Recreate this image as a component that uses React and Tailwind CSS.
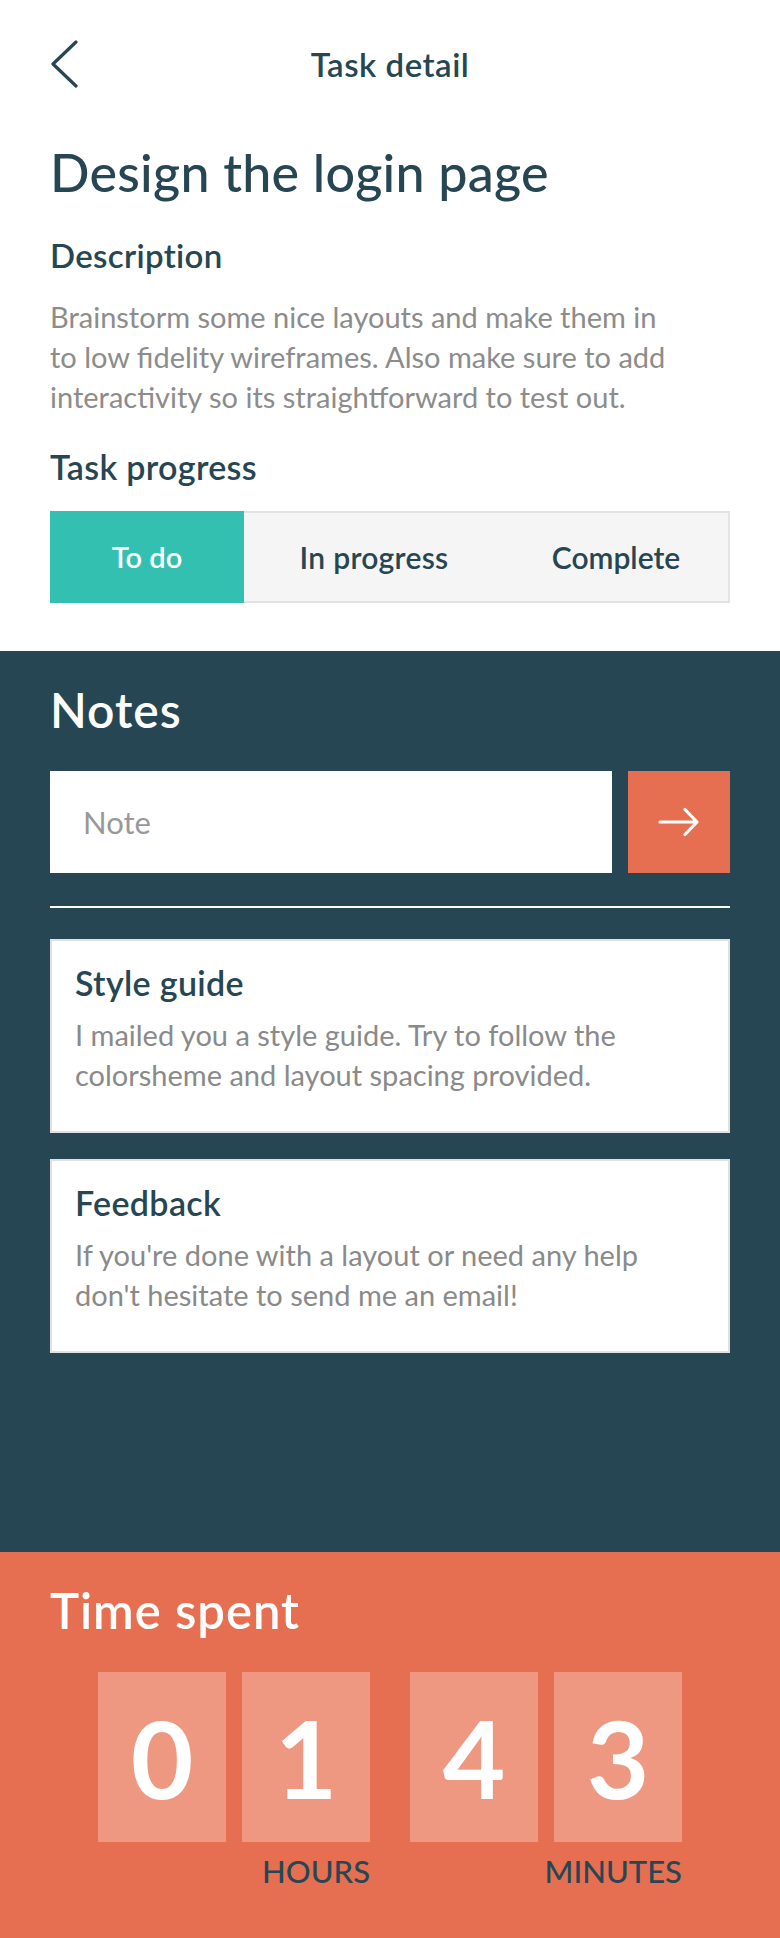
const DARK = "text-[#264653]";

function BackIcon() {
  return (
    <svg width="28" height="48" viewBox="0 0 28 48" fill="none">
      <path d="M26 2 L3 24 L26 46" stroke="#264653" strokeWidth="3.2" strokeLinecap="round" strokeLinejoin="round" />
    </svg>
  );
}

function ArrowIcon() {
  return (
    <svg width="42" height="30" viewBox="0 0 42 30" fill="none">
      <path d="M2 15 H39 M27 2.5 L39 15 L27 27.5" stroke="#ffffff" strokeWidth="3.2" strokeLinecap="round" strokeLinejoin="round" />
    </svg>
  );
}

function NoteCard({ title, children }) {
  return (
    <div className="bg-white border-2 border-[#e1e1e1] pt-[23px] px-[23px] pb-[36px]">
      <h3 className={`text-[34px] leading-[38px] font-semibold tracking-[0.01em] ${DARK}`}>{title}</h3>
      <p className="mt-[13px] text-[29px] leading-[40px] text-[#8a8a8a]">{children}</p>
    </div>
  );
}

function Digit({ value }) {
  return (
    <div className="w-[128px] h-[170px] bg-[#ee9882] flex items-center justify-center">
      <span className="text-[108px] leading-none font-bold text-white">{value}</span>
    </div>
  );
}

function DigitGroup({ digits, label }) {
  return (
    <div className="flex flex-col items-end">
      <div className="flex gap-[16px]">
        {digits.map((d, i) => (
          <Digit key={i} value={d} />
        ))}
      </div>
      <span className={`mt-[11px] text-[31px] leading-[36px] font-medium ${DARK}`}>{label}</span>
    </div>
  );
}

export default function App() {
  return (
    <div className="w-full font-['Lato','Noto_Sans',sans-serif] bg-white">
      {/* Task section */}
      <div className="px-[50px] pb-[48px]">
        <div className="pt-[40px] h-[88px] flex items-center">
          <div className="w-[28px] h-[48px] flex">
            <BackIcon />
          </div>
          <h1 className={`flex-1 text-center text-[33px] leading-[38px] font-semibold tracking-[0.015em] ${DARK}`}>Task detail</h1>
          <div className="w-[28px]" />
        </div>

        <h2 className={`mt-[53px] text-[52px] leading-[62px] font-medium tracking-[0.005em] ${DARK}`}>Design the login page</h2>

        <h3 className={`mt-[33px] text-[33px] leading-[38px] font-semibold tracking-[0.01em] ${DARK}`}>Description</h3>
        <p className="mt-[23px] text-[29px] leading-[40px] text-[#8c8c8c]">
          Brainstorm some nice layouts and make them in
          <br />
          to low fidelity wireframes. Also make sure to add
          <br />
          interactivity so its straightforward to test out.
        </p>

        <h3 className={`mt-[31px] text-[34px] leading-[38px] font-semibold tracking-[0.01em] ${DARK}`}>Task progress</h3>
        <div className="mt-[25px] flex h-[92px]">
          <button className="w-[194px] bg-[#34c0b0] text-white text-[29px] font-semibold">To do</button>
          <div className="flex-1 flex border-2 border-l-0 border-[#e3e3e3] bg-[#f5f5f5]">
            <button className={`w-[260px] text-[30px] font-semibold tracking-[0.01em] ${DARK}`}>In progress</button>
            <button className={`flex-1 text-[30px] font-semibold ${DARK}`}>Complete</button>
          </div>
        </div>
      </div>

      {/* Notes section */}
      <div className="bg-[#264653] h-[901px] px-[50px] pt-[31px]">
        <h2 className="text-[48px] leading-[55px] font-semibold tracking-[0.02em] text-white">Notes</h2>
        <div className="mt-[34px] flex gap-[16px] h-[102px]">
          <input
            placeholder="Note"
            className="flex-1 min-w-0 bg-white pl-[33px] text-[31px] text-[#264653] placeholder:text-[#999999] outline-none"
          />
          <button className="w-[102px] bg-[#e76f51] flex items-center justify-center">
            <ArrowIcon />
          </button>
        </div>
        <div className="mt-[33px] h-[2px] bg-white" />
        <div className="mt-[31px] flex flex-col gap-[26px]">
          <NoteCard title="Style guide">
            I mailed you a style guide. Try to follow the
            <br />
            colorsheme and layout spacing provided.
          </NoteCard>
          <NoteCard title="Feedback">
            If you're done with a layout or need any help
            <br />
            don't hesitate to send me an email!
          </NoteCard>
        </div>
      </div>

      {/* Time section */}
      <div className="bg-[#e76f51] px-[50px] pt-[31px] pb-[49px]">
        <h2 className="text-[49px] leading-[55px] font-semibold tracking-[0.02em] text-white">Time spent</h2>
        <div className="mt-[34px] flex justify-center gap-[40px]">
          <DigitGroup digits={["0", "1"]} label="HOURS" />
          <DigitGroup digits={["4", "3"]} label="MINUTES" />
        </div>
      </div>
    </div>
  );
}
